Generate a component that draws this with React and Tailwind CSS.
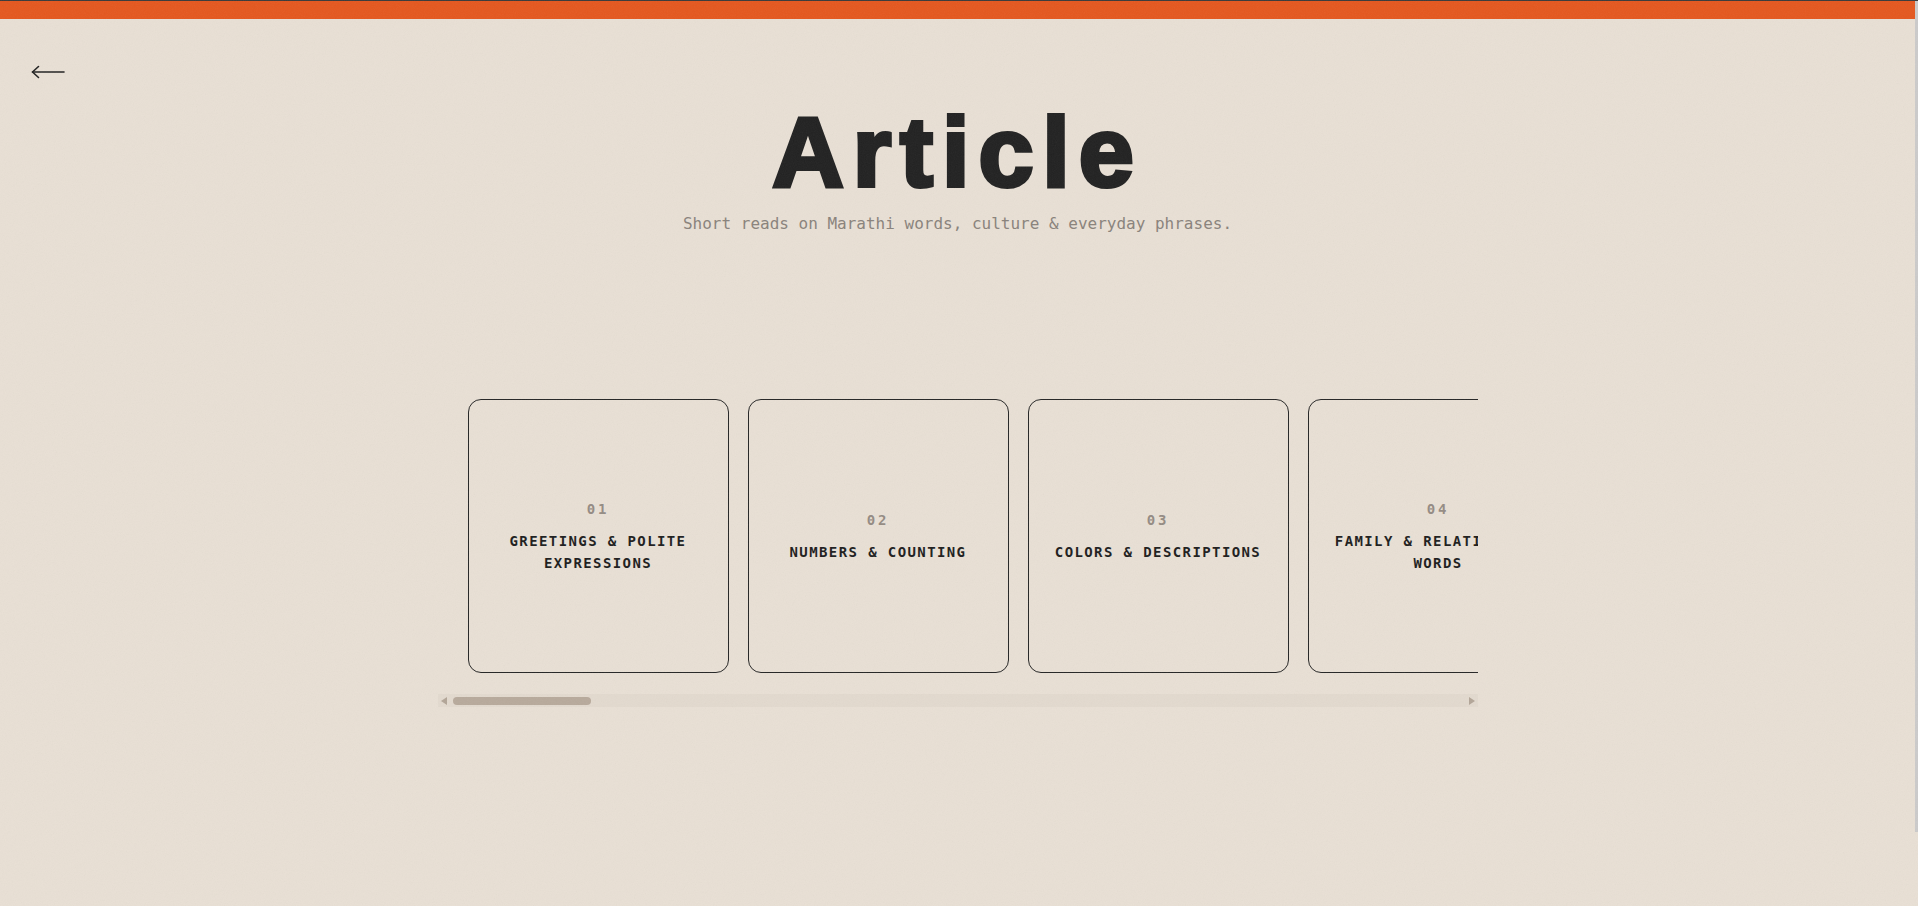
import React from 'react';

const articles = [
  'Greetings & Polite Expressions',
  'Numbers & Counting',
  'Colors & Descriptions',
  'Family & Relationship Words',
  'Food & Kitchen Vocabulary',
  'Days, Months & Seasons',
  'Festivals of Maharashtra',
  'Everyday Verbs',
  'Asking for Directions',
  'Market & Shopping Phrases',
  'Body & Health',
  'Weather Words',
  'Animals & Birds',
  'Telling the Time',
  'Home & Household',
  'Travel & Transport',
  'Feelings & Emotions',
  'Proverbs & Sayings',
  'Devanagari Basics',
  'Pronouns & Questions',
  'School & Learning',
  'Work & Professions',
  'Nature & Landscape',
  'Clothing & Jewellery',
  'Music & Theatre',
  'Common Idioms',
  'Conversation Starters',
];

const mono = { fontFamily: '"DejaVu Sans Mono", "Liberation Mono", monospace' };

const BackArrow = () => (
  <svg width="34" height="14" viewBox="0 0 34 14" fill="none" stroke="#222" strokeWidth="1.6" strokeLinecap="round">
    <path d="M33 7H1.5" />
    <path d="M7.5 1.5L1.5 7l6 5.5" strokeLinejoin="round" />
  </svg>
);

const ArticleCard = ({ index, title }) => (
  <div className="shrink-0 w-[261px] h-[274px] rounded-[13px] border border-[#262626] flex flex-col items-center justify-center px-6 text-center">
    <div className="text-[14px] leading-[20px] font-bold tracking-[0.2em] text-[#958c84] mb-[11px]" style={mono}>
      {String(index + 1).padStart(2, '0')}
    </div>
    <div className="text-[14px] leading-[22px] font-bold tracking-[0.1em] uppercase text-[#1e1e1e]" style={mono}>
      {title}
    </div>
  </div>
);

// drawn scrollbar under the card strip (native bars are hidden in this page)
const StripScrollbar = () => (
  <div className="mx-auto w-[1040px] h-[13px] bg-[#e3dacf] flex items-center">
    <div className="w-[12px] h-full flex items-center pl-[3px]">
      <div className="w-0 h-0 border-y-[4px] border-y-transparent border-r-[6px] border-r-[#b3a698]" />
    </div>
    <div className="flex-1 h-full flex items-center">
      <div className="ml-[3px] w-[138px] h-[8px] rounded-full bg-[#b8aa9c]" />
    </div>
    <div className="w-[12px] h-full flex items-center justify-end pr-[3px]">
      <div className="w-0 h-0 border-y-[4px] border-y-transparent border-l-[6px] border-l-[#b3a698]" />
    </div>
  </div>
);

const App = () => {
  return (
    <div className="h-screen flex flex-col bg-[#e9e0d5]">
      <div className="h-px bg-[#3a3a3a] shrink-0" />
      <div className="flex-1 flex min-h-0">
        <div className="flex-1 overflow-y-auto [scrollbar-width:none]">
          <div className="min-h-[984px] flex flex-col">
            <div className="h-[18px] bg-[#e5581f] shrink-0" />

            <div className="pl-[31px] pt-[46px]">
              <button className="block cursor-pointer">
                <BackArrow />
              </button>
            </div>

            <h1
              className="mt-[23px] text-center text-[99px] leading-none font-bold tracking-[0.09em] text-[#222] [-webkit-text-stroke:4px_#222]"
              style={{ fontFamily: '"Liberation Sans", Arial, sans-serif' }}
            >
              Article
            </h1>
            <p className="mt-[11px] text-center text-[16px] leading-[24px] text-[#8a837c]" style={mono}>
              Short reads on Marathi words, culture &amp; everyday phrases.
            </p>

            <div className="mt-[142px] mx-auto w-[1040px] overflow-x-auto [scrollbar-width:none] px-[30px] pt-[21px] pb-[21px]">
              <div className="flex gap-[19px] w-max">
                {articles.map((title, i) => (
                  <ArticleCard key={title} index={i} title={title} />
                ))}
              </div>
            </div>
            <StripScrollbar />
          </div>
        </div>
        <div className="w-[3px] shrink-0">
          <div className="h-[831px] bg-[#cccbcb]" />
        </div>
      </div>

      <svg className="pointer-events-none fixed inset-0 w-full h-full opacity-[0.06]">
        <filter id="grain">
          <feTurbulence type="fractalNoise" baseFrequency="0.9" numOctaves="2" stitchTiles="stitch" />
          <feColorMatrix type="saturate" values="0" />
        </filter>
        <rect width="100%" height="100%" filter="url(#grain)" />
      </svg>
    </div>
  );
};

export default App;
